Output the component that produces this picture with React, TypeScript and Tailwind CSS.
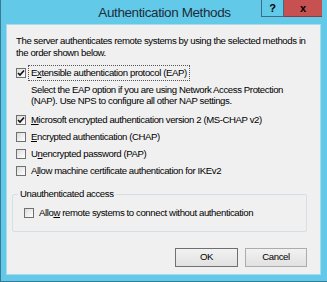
import React from "react";

function Box({ checked }: { checked?: boolean }) {
  return (
    <div className="w-[10px] h-[10px] shrink-0 border border-[#707070] bg-gradient-to-br from-[#dcdcdc] to-white flex items-center justify-center">
      {checked && (
        <svg width="8" height="8" viewBox="0 0 8 8">
          <path d="M1 4 L3 6 L7 1.5" fill="none" stroke="#111" strokeWidth="1.6" />
        </svg>
      )}
    </div>
  );
}

function Row({
  checked,
  children,
  focus,
}: {
  checked?: boolean;
  children: React.ReactNode;
  focus?: boolean;
}) {
  return (
    <div className="flex items-center h-[12px] gap-[5px]">
      <Box checked={checked} />
      <span
        className={
          focus
            ? "leading-[12px] px-[1px] -ml-[1px] outline outline-1 outline-dotted outline-[#555] outline-offset-[1px]"
            : "leading-[12px]"
        }
      >
        {children}
      </span>
    </div>
  );
}

export default function App() {
  return (
    <div className="w-[327px] h-[282px] bg-[#63c9e8] border-l border-b border-[#3b7892] flex flex-col font-['Liberation_Sans',Arial,sans-serif] text-[9.6px] tracking-[-0.4px] text-black">
      <div className="relative h-[24px] shrink-0 flex items-center justify-center">
        <span className="text-[13.5px] tracking-[-0.4px] text-[#1c2e3b] leading-none pl-[1px] pt-[1px]">
          Authentication Methods
        </span>
        <div className="absolute top-0 right-[5px] flex h-[17px]">
          <div className="w-[23px] h-full border-l border-b border-r border-[#3d6d84] bg-[#63c9e8] flex items-center justify-center text-[11px] font-bold text-black tracking-normal">
            ?
          </div>
          <div className="w-[38px] h-full bg-[#c75050] border-b border-[#8a3a3a] flex items-center justify-center text-[11px] font-bold text-black tracking-normal">
            x
          </div>
        </div>
      </div>
      <div className="ml-[5px] mr-[6px] mb-[6px] flex-1 bg-[#f0f0f0] border border-[#a6dbec] flex flex-col pl-[9px] pr-[12px] pt-[10px]">
        <p className="leading-[11.5px]">
          The server authenticates remote systems by using the selected methods in
          <br />
          the order shown below.
        </p>
        <div className="mt-[9px]">
          <Row checked focus>
            E<u>x</u>tensible authentication protocol (EAP)
          </Row>
        </div>
        <p className="ml-[15px] mt-[5px] leading-[11px]">
          Select the EAP option if you are using Network Access Protection
          <br />
          (NAP). Use NPS to configure all other NAP settings.
        </p>
        <div className="mt-[8px] flex flex-col gap-[5px]">
          <Row checked>
            <u>M</u>icrosoft encrypted authentication version 2 (MS-CHAP v2)
          </Row>
          <Row>
            <u>E</u>ncrypted authentication (CHAP)
          </Row>
          <Row>
            U<u>n</u>encrypted password (PAP)
          </Row>
          <Row>
            A<u>l</u>low machine certificate authentication for IKEv2
          </Row>
        </div>
        <div className="mt-[17px] -ml-[4px] mr-[1px] border border-[#d5dfe5] rounded-[2px] h-[38px] relative pl-[11px] pt-[12px]">
          <span className="absolute -top-[7px] left-[5px] bg-[#f0f0f0] px-[2px] leading-[12px]">
            Unauthenticated access
          </span>
          <Row>
            Allo<u>w</u> remote systems to connect without authentication
          </Row>
        </div>
        <div className="mt-[16px] flex justify-end gap-[7px] mr-[1px]">
          <div className="w-[63px] h-[19px] border border-[#707070] bg-gradient-to-b from-[#f2f2f2] to-[#e1e1e1] flex items-center justify-center">
            OK
          </div>
          <div className="w-[62px] h-[19px] border border-[#acacac] bg-gradient-to-b from-[#f2f2f2] to-[#e1e1e1] flex items-center justify-center">
            Cancel
          </div>
        </div>
      </div>
    </div>
  );
}
